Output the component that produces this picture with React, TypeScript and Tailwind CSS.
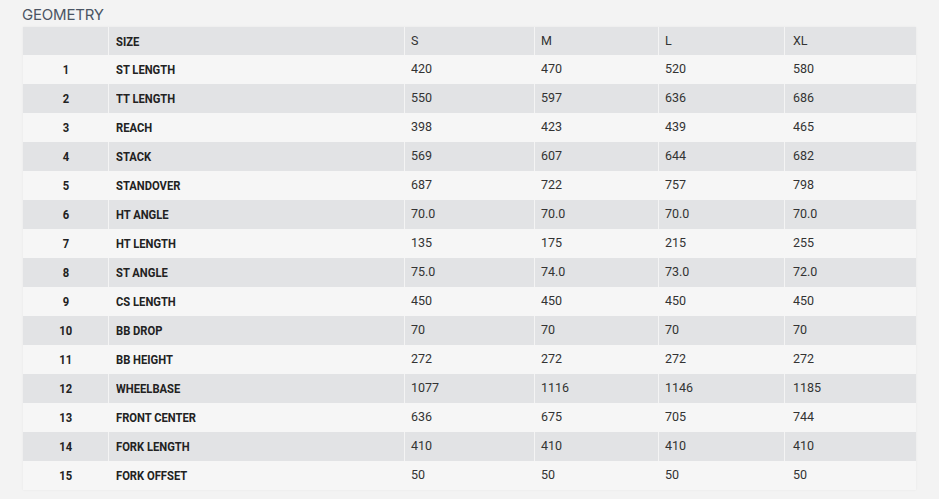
const sizes = ["S", "M", "L", "XL"];

const rows: [string, string[]][] = [
  ["ST LENGTH", ["420", "470", "520", "580"]],
  ["TT LENGTH", ["550", "597", "636", "686"]],
  ["REACH", ["398", "423", "439", "465"]],
  ["STACK", ["569", "607", "644", "682"]],
  ["STANDOVER", ["687", "722", "757", "798"]],
  ["HT ANGLE", ["70.0", "70.0", "70.0", "70.0"]],
  ["HT LENGTH", ["135", "175", "215", "255"]],
  ["ST ANGLE", ["75.0", "74.0", "73.0", "72.0"]],
  ["CS LENGTH", ["450", "450", "450", "450"]],
  ["BB DROP", ["70", "70", "70", "70"]],
  ["BB HEIGHT", ["272", "272", "272", "272"]],
  ["WHEELBASE", ["1077", "1116", "1146", "1185"]],
  ["FRONT CENTER", ["636", "675", "705", "744"]],
  ["FORK LENGTH", ["410", "410", "410", "410"]],
  ["FORK OFFSET", ["50", "50", "50", "50"]],
];

const cols = "grid grid-cols-[86px_296px_130px_124px_126px_131px]";
// condensed bold look for the labels
const narrow = "inline-block font-['Roboto',sans-serif] font-bold text-[13.5px] text-[#222] scale-x-[0.83]";
const plain = "font-['Roboto','Liberation_Sans',sans-serif] text-[12.5px] text-[#333]";

export default function App() {
  return (
    <main className="w-[939px] h-[499px] bg-[#f3f3f3] overflow-hidden">
      <h2 className="pl-[22px] pt-[4px] h-[27px] font-['Inter','Noto_Sans',sans-serif] text-[15px] text-[#4b5563] tracking-[-0.2px]">
        GEOMETRY
      </h2>

      <div className="ml-[23px] w-[893px] shadow-[0_0_2px_rgba(0,0,0,0.06)]">
        <div className={`${cols} h-[28px] bg-[#e2e3e5] items-center`}>
          <div className="h-full border-r border-[#f4f4f4]" />
          <div className="pl-[7px] h-full flex items-center border-r border-[#f4f4f4]">
            <span className={`${narrow} origin-left`}>SIZE</span>
          </div>
          {sizes.map((s, i) => (
            <div
              key={s}
              className={`${plain} h-full flex items-center ${i === 3 ? "pl-[8px]" : "pl-[6px] border-r border-[#f4f4f4]"}`}
            >
              {s}
            </div>
          ))}
        </div>

        {rows.map(([name, vals], idx) => {
          const sep = idx % 2 === 0 ? "border-[#f6f6f6]" : "border-[#f4f4f4]";
          return (
            <div
              key={name}
              className={`${cols} h-[29px] ${idx % 2 === 0 ? "bg-[#f6f6f6]" : "bg-[#e2e3e5]"}`}
            >
              <div className={`flex items-center justify-center border-r ${sep}`}>
                <span className={`${narrow} origin-center`}>{idx + 1}</span>
              </div>
              <div className={`pl-[7px] flex items-center border-r ${sep}`}>
                <span className={`${narrow} origin-left whitespace-nowrap`}>{name}</span>
              </div>
              {vals.map((v, i) => (
                <div
                  key={i}
                  className={`${plain} flex items-center ${i === 3 ? "pl-[8px]" : `pl-[6px] border-r ${sep}`}`}
                >
                  {v}
                </div>
              ))}
            </div>
          );
        })}
      </div>
    </main>
  );
}
